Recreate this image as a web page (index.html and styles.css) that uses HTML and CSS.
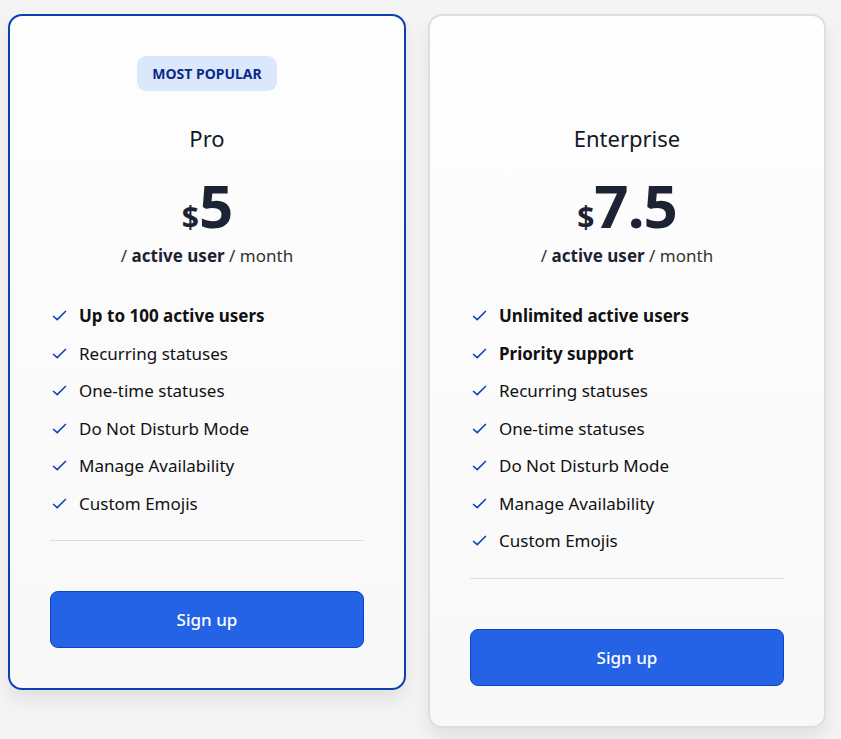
FILE: index.html
```html
<!DOCTYPE html>
<html lang="en">
<head>
    <meta charset="UTF-8">
    <meta name="viewport" content="width=device-width, initial-scale=1.0">
    <title>Pricing</title>
    <link rel="stylesheet" href="styles.css">
</head>
<body>
    <div class="plans">
        <!-- Pro plan -->
        <div class="plan plan-featured">
            <div class="badge-row"><span class="badge">MOST POPULAR</span></div>
            <h2 class="plan-name">Pro</h2>
            <div class="price"><span class="currency">$</span><span class="amount">5</span></div>
            <div class="per">/ <b>active user</b> / month</div>
            <ul class="features">
                <li class="strong"><svg class="check" viewBox="0 0 16 12"><path d="M1 6.5 L5.5 10.5 L15 1"/></svg>Up to 100 active users</li>
                <li><svg class="check" viewBox="0 0 16 12"><path d="M1 6.5 L5.5 10.5 L15 1"/></svg>Recurring statuses</li>
                <li><svg class="check" viewBox="0 0 16 12"><path d="M1 6.5 L5.5 10.5 L15 1"/></svg>One-time statuses</li>
                <li><svg class="check" viewBox="0 0 16 12"><path d="M1 6.5 L5.5 10.5 L15 1"/></svg>Do Not Disturb Mode</li>
                <li><svg class="check" viewBox="0 0 16 12"><path d="M1 6.5 L5.5 10.5 L15 1"/></svg>Manage Availability</li>
                <li><svg class="check" viewBox="0 0 16 12"><path d="M1 6.5 L5.5 10.5 L15 1"/></svg>Custom Emojis</li>
            </ul>
            <hr class="divider">
            <button class="signup">Sign up</button>
        </div>

        <!-- Enterprise plan -->
        <div class="plan">
            <div class="badge-row"></div>
            <h2 class="plan-name">Enterprise</h2>
            <div class="price"><span class="currency">$</span><span class="amount">7.5</span></div>
            <div class="per">/ <b>active user</b> / month</div>
            <ul class="features">
                <li class="strong"><svg class="check" viewBox="0 0 16 12"><path d="M1 6.5 L5.5 10.5 L15 1"/></svg>Unlimited active users</li>
                <li class="strong"><svg class="check" viewBox="0 0 16 12"><path d="M1 6.5 L5.5 10.5 L15 1"/></svg>Priority support</li>
                <li><svg class="check" viewBox="0 0 16 12"><path d="M1 6.5 L5.5 10.5 L15 1"/></svg>Recurring statuses</li>
                <li><svg class="check" viewBox="0 0 16 12"><path d="M1 6.5 L5.5 10.5 L15 1"/></svg>One-time statuses</li>
                <li><svg class="check" viewBox="0 0 16 12"><path d="M1 6.5 L5.5 10.5 L15 1"/></svg>Do Not Disturb Mode</li>
                <li><svg class="check" viewBox="0 0 16 12"><path d="M1 6.5 L5.5 10.5 L15 1"/></svg>Manage Availability</li>
                <li><svg class="check" viewBox="0 0 16 12"><path d="M1 6.5 L5.5 10.5 L15 1"/></svg>Custom Emojis</li>
            </ul>
            <hr class="divider">
            <button class="signup">Sign up</button>
        </div>
    </div>
</body>
</html>
```

FILE: styles.css
```css
body {
    margin: 0;
    padding: 14px 8px;
    background: #f4f4f4;
    font-family: "Noto Sans", Arial, sans-serif;
    color: #111827;
}
.plans {
    display: flex;
    align-items: flex-start;
    gap: 22px;
}
.plan {
    width: 398px;
    box-sizing: border-box;
    padding: 40px 40px 40px;
    border: 2px solid #dedede;
    border-radius: 14px;
    background: linear-gradient(#fefefe, #f8f8f8);
    box-shadow: 0 10px 18px rgba(0, 0, 0, 0.08);
    text-align: center;
}
.plan-featured {
    border-color: #0b3fb3;
}
.badge-row {
    height: 35px;
}
.badge {
    display: inline-block;
    height: 35px;
    line-height: 35px;
    padding: 0 15px;
    border-radius: 9px;
    background: #dbe8fc;
    color: #0b2a8a;
    font-size: 14px;
    font-weight: 700;
}
.plan-name {
    margin: 32px 0 0;
    font-size: 22px;
    font-weight: 400;
    line-height: 30px;
}
.price {
    margin-top: 30px;
    line-height: 45px;
    color: #1c2333;
    font-weight: 700;
}
.currency {
    font-size: 30px;
}
.amount {
    font-size: 60px;
    letter-spacing: -1px;
}
.per {
    font-size: 17px;
    line-height: 22px;
    color: #333;
}
.per b {
    color: #1c2333;
}
.features {
    list-style: none;
    margin: 30px 0 0;
    padding: 0 0 0 2px;
    text-align: left;
}
.features li {
    display: flex;
    align-items: center;
    height: 37.5px;
    font-size: 17px;
    color: #111;
}
.features li.strong {
    font-weight: 700;
}
.check {
    width: 15px;
    height: 11px;
    margin-right: 12px;
    fill: none;
    stroke: #0b3fb3;
    stroke-width: 1.6;
}
.divider {
    margin: 18px 0 50px;
    border: none;
    border-top: 1px solid #dcdcdc;
}
.signup {
    width: 100%;
    height: 57px;
    border: 1px solid #0b46c9;
    border-radius: 8px;
    background: #2563e6;
    color: #fff;
    font-family: inherit;
    font-size: 17px;
    font-weight: 500;
}
```
